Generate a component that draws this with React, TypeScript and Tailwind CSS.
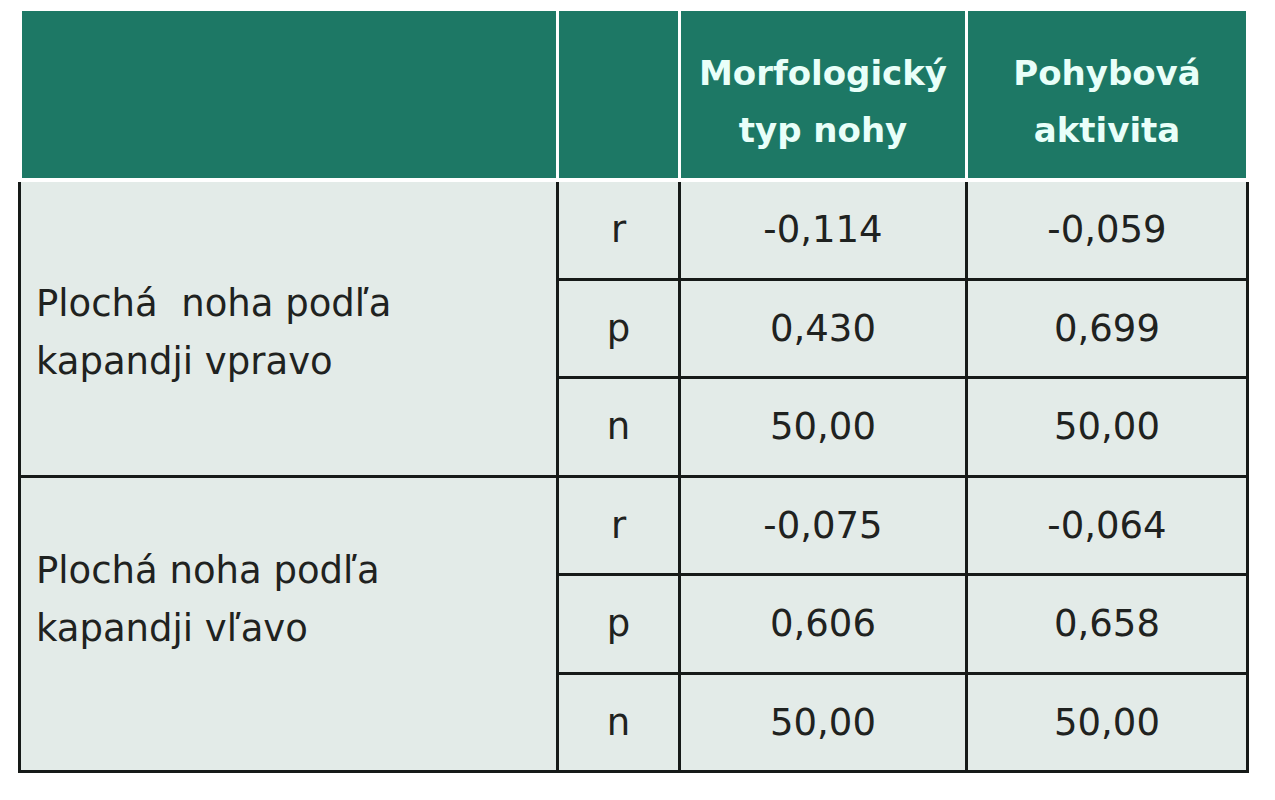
const groups = [
  {
    label: ["Plochá  noha podľa", "kapandji vpravo"],
    pad: "pt-[10px]",
    rows: [
      ["r", "-0,114", "-0,059"],
      ["p", "0,430", "0,699"],
      ["n", "50,00", "50,00"],
    ],
  },
  {
    label: ["Plochá noha podľa", "kapandji vľavo"],
    pad: "pb-[48px]",
    rows: [
      ["r", "-0,075", "-0,064"],
      ["p", "0,606", "0,658"],
      ["n", "50,00", "50,00"],
    ],
  },
];

function HeadCell({ lines, w }: { lines?: string[]; w: string }) {
  return (
    <div className={`${w} bg-[#1d7865] flex flex-col items-center justify-center pt-[14px] text-[#e9fff9] font-bold text-[34px] leading-[57px]`}>
      {lines?.map((l) => (
        <span key={l} className="whitespace-pre">{l}</span>
      ))}
    </div>
  );
}

export default function App() {
  return (
    <div
      className="w-[1275px] h-[800px] bg-white pl-[18px] pt-[11px]"
      style={{ fontFamily: '"DejaVu Sans", Verdana, sans-serif' }}
    >
      {/* header */}
      <div className="ml-[4px] flex gap-[3px] h-[167px]">
        <HeadCell w="w-[534px]" />
        <HeadCell w="w-[119px]" />
        <HeadCell w="w-[284px]" lines={["Morfologický", "typ nohy"]} />
        <HeadCell w="w-[278px]" lines={["Pohybová", "aktivita"]} />
      </div>

      {/* body */}
      <div className="mt-[4px] w-[1231px] h-[591px] bg-[#161a18] px-[3px] pb-[3px] grid grid-cols-[535px_119px_284px_278px] grid-rows-6 gap-[3px] text-[37px] text-[#1f2220]">
        {groups.map((g, gi) => (
          <>
            <div
              key={`l${gi}`}
              className={`bg-[#e3ebe8] row-span-3 flex flex-col justify-center pl-[15px] leading-[58px] ${g.pad} ${gi === 0 ? "row-start-1" : "row-start-4"} col-start-1`}
            >
              {g.label.map((l) => (
                <span key={l} className="whitespace-pre">{l}</span>
              ))}
            </div>
            {g.rows.map((r, ri) =>
              r.map((c, ci) => (
                <div
                  key={`${gi}-${ri}-${ci}`}
                  className="bg-[#e3ebe8] flex items-center justify-center"
                >
                  {c}
                </div>
              ))
            )}
          </>
        ))}
      </div>
    </div>
  );
}
